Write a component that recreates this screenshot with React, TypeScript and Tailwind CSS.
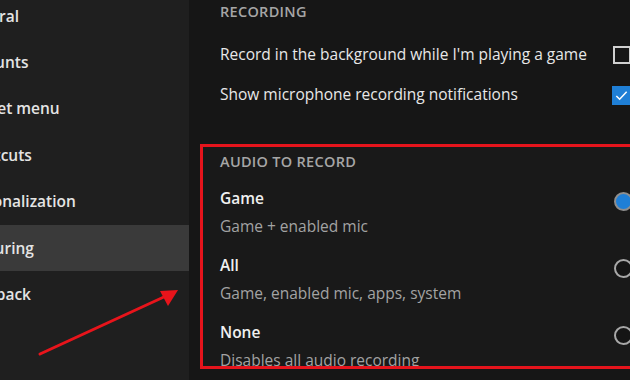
import React from "react";

const navItems = ["General", "Accounts", "Widget menu", "Shortcuts", "Personalization", "Capturing", "Feedback"];

function Checkbox({ checked }: { checked: boolean }) {
  if (checked) {
    return (
      <div className="w-[19px] h-[19px] bg-[#1f7fd6] flex items-center justify-center shrink-0">
        <svg width="15" height="15" viewBox="0 0 16 16" fill="none">
          <path d="M2.5 8.5 L6 12 L13.5 4" stroke="#ffffff" strokeWidth="1.6" />
        </svg>
      </div>
    );
  }
  return <div className="w-[18px] h-[18px] border-2 border-[#d0d0d0] shrink-0" />;
}

function Radio({ checked }: { checked: boolean }) {
  if (checked) {
    return (
      <div className="w-[19px] h-[19px] rounded-full border-2 border-[#8e8e8e] bg-[#1f7fd6] shrink-0" />
    );
  }
  return <div className="w-[19px] h-[19px] rounded-full border-2 border-[#a8a8a8] bg-[#151515] shrink-0" />;
}

const options = [
  { title: "Game", sub: "Game + enabled mic", checked: true },
  { title: "All", sub: "Game, enabled mic, apps, system", checked: false },
  { title: "None", sub: "Disables all audio recording", checked: false },
];

export default function App() {
  return (
    <div
      className="relative w-[630px] h-[380px] overflow-hidden flex bg-[#161616]"
      style={{ fontFamily: '"Open Sans", "Noto Sans", sans-serif' }}
    >
      {/* Sidebar */}
      <div className="w-[189px] h-full bg-[#1f1f1f] shrink-0 overflow-hidden">
        <div className="mt-[-7px] flex flex-col">
          {navItems.map((n) => (
            <div
              key={n}
              className={
                "h-[46.4px] flex items-center text-[15.5px] font-semibold text-[#e4e4e4] whitespace-nowrap " +
                (n === "Capturing" ? "bg-[#3a3a3a]" : "")
              }
            >
              <span className="ml-[-40px]">{n}</span>
            </div>
          ))}
        </div>
      </div>

      {/* Main */}
      <div className="shrink-0 w-[460px] pl-[11px]">
        <div className="w-[446px]">
          <div className="pl-[20px] pr-[15px]">
            <div className="pt-[2px] h-[22px] leading-[20px] text-[14.5px] font-semibold text-[#a6a6a6] tracking-[0.02em]">
              RECORDING
            </div>
            <div className="mt-[23px] h-[20px] flex items-center justify-between text-[15.5px] text-[#e8e8e8] whitespace-nowrap">
              <span>Record in the background while I'm playing a game</span>
              <Checkbox checked={false} />
            </div>
            <div className="mt-[20px] h-[20px] flex items-center justify-between text-[15.5px] text-[#e8e8e8] whitespace-nowrap">
              <span>Show microphone recording notifications</span>
              <Checkbox checked={true} />
            </div>
          </div>

          <div className="mt-[39px] h-[225px] overflow-hidden border-[3px] border-[#e5141c] pl-[17px] pr-[12px] bg-[#191919]">
            <div className="mt-[5px] h-[20px] leading-[20px] text-[14.5px] font-semibold text-[#a6a6a6] tracking-[0.02em]">
              AUDIO TO RECORD
            </div>
            <div className="mt-[17px] flex flex-col gap-[20px]">
              {options.map((o) => (
                <div key={o.title} className="flex flex-col">
                  <div className="h-[20px] flex items-center justify-between">
                    <span className="text-[15.5px] font-semibold text-[#f0f0f0]">{o.title}</span>
                    <div className="mt-[4px] mr-[-2px]">
                      <Radio checked={o.checked} />
                    </div>
                  </div>
                  <div className="mt-[7px] h-[20px] leading-[20px] text-[15.5px] text-[#a3a3a3] whitespace-nowrap">
                    {o.sub}
                  </div>
                </div>
              ))}
            </div>
          </div>
        </div>
      </div>

      {/* Arrow annotation */}
      <svg className="absolute left-0 top-0 pointer-events-none" width="630" height="380">
        <line x1="40" y1="354" x2="166" y2="296" stroke="#e8141b" strokeWidth="3" strokeLinecap="round" />
        <polygon points="178,290 160,291 168,306" fill="#e8141b" />
      </svg>
    </div>
  );
}
